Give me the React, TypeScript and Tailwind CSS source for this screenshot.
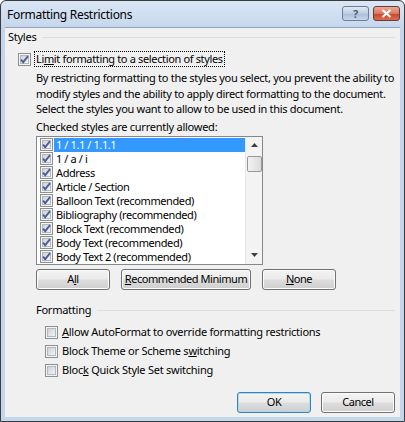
import React from "react";

const font = { fontFamily: '"Segoe UI", "Noto Sans", "Open Sans", sans-serif' };

function Check({ checked }: { checked?: boolean }) {
  return (
    <svg width="13" height="13" viewBox="0 0 13 13" className="shrink-0">
      <defs>
        <linearGradient id="cbg" x1="0" y1="0" x2="1" y2="1">
          <stop offset="0" stopColor="#cbcfd5" />
          <stop offset="1" stopColor="#f6f6f6" />
        </linearGradient>
      </defs>
      <rect x="0.5" y="0.5" width="12" height="12" fill="#f4f4f4" stroke="#8e8f8f" />
      <rect x="2.5" y="2.5" width="8" height="8" fill="url(#cbg)" stroke="#b4b9bf" />
      {checked && (
        <path d="M3 6.6 L5.2 9.2 L10 3.2" fill="none" stroke="#4c6198" strokeWidth="1.9" />
      )}
    </svg>
  );
}

function Btn({ children, w, primary }: { children: React.ReactNode; w: string; primary?: boolean }) {
  return (
    <div
      className={`${w} h-[21px] shrink-0 whitespace-nowrap tracking-[-0.45px] rounded-[3px] border flex items-center justify-center text-black bg-[linear-gradient(#f3f3f3_0%,#ebebeb_48%,#dddddd_52%,#cfcfcf_100%)] ${
        primary ? "border-[#3c7fb1] shadow-[inset_0_0_0_1px_#a7dcf7]" : "border-[#707070] shadow-[inset_0_0_0_1px_#fcfcfc]"
      }`}
    >
      {children}
    </div>
  );
}

const items = [
  "1 / 1.1 / 1.1.1",
  "1 / a / i",
  "Address",
  "Article / Section",
  "Balloon Text (recommended)",
  "Bibliography (recommended)",
  "Block Text (recommended)",
  "Body Text (recommended)",
  "Body Text 2 (recommended)",
];

export default function App() {
  return (
    <div
      style={font}
      className="w-[405px] h-[422px] rounded-t-[6px] border border-[#3b3b3b] bg-[linear-gradient(#dae6f5,#c3d5ec_30px,#c2d6ee)] flex flex-col overflow-hidden"
    >
      {/* title bar */}
      <div className="h-[26px] flex items-center pl-[6px] pr-[4px] shrink-0">
        <span className="text-[12px] tracking-[-0.3px] text-black flex-1 pt-[1px]">Formatting Restrictions</span>
        <div className="flex gap-[4px] -mt-[2px]">
          <div className="w-[27px] h-[15px] rounded-[3px] border border-[#6d7f96] bg-[linear-gradient(#dfe9f5,#bccde3_50%,#a9bdd8_51%,#c6d6ea)] flex items-center justify-center text-[11px] font-bold text-[#4d5e74] leading-none">
            ?
          </div>
          <div className="w-[27px] h-[15px] rounded-[3px] border border-[#6a3a35] bg-[linear-gradient(#eba99a,#dc7660_50%,#c8432a_51%,#dc6c4f)] flex items-center justify-center">
            <svg width="11" height="9" viewBox="0 0 11 9">
              <path d="M1.5 1 L9.5 8 M9.5 1 L1.5 8" stroke="#fff" strokeWidth="2.2" />
            </svg>
          </div>
        </div>
      </div>

      {/* client area */}
      <div className="flex-1 mx-[4px] mb-[4px] bg-[#f0f0f0] border-t border-[#8ea3be] text-[11px] tracking-[-0.25px] text-black flex flex-col">
        <div className="flex items-center pl-[3px] pr-[5px] mt-[1px] h-[16px]">
          <span>Styles</span>
          <div className="flex-1 ml-[6px] h-px bg-[#d5dfe5]" />
        </div>

        <div className="flex items-center ml-[13px] mt-[6px] h-[16px]">
          <Check checked />
          <span className="ml-[3px] px-[1px] border border-dotted border-black leading-[14px] tracking-[-0.35px]">
            Li<u>m</u>it formatting to a selection of styles
          </span>
        </div>

        <div className="ml-[31px] mt-[3px] leading-[15.5px] whitespace-nowrap tracking-[-0.3px]">
          <div>By restricting formatting to the styles you select, you prevent the ability to</div>
          <div>modify styles and the ability to apply direct formatting to the document.</div>
          <div>Select the styles you want to allow to be used in this document.</div>
        </div>

        <div className="ml-[31px] mt-[2px] leading-[16px]">Checked styles are currently allowed:</div>

        <div className="ml-[31px] mt-[1px] w-[227px] h-[129px] shrink-0 border border-[#828790] bg-white flex overflow-hidden">
          <div className="flex-1 pt-[1px] pl-[3px] tracking-[-0.4px]">
            {items.map((t, i) => (
              <div key={t} className="h-[14px] flex items-center">
                <Check checked />
                <span
                  className={`ml-[1px] pl-[2px] h-[14px] leading-[14px] flex-1 whitespace-nowrap ${
                    i === 0 ? "bg-[#3399ff] text-white" : ""
                  }`}
                >
                  {t}
                </span>
              </div>
            ))}
          </div>
          <div className="w-[17px] bg-[#f3f3f3] border-l border-[#e6e6e6] flex flex-col items-center">
            <div className="h-[17px] flex items-center justify-center">
              <svg width="7" height="4" viewBox="0 0 7 4">
                <path d="M0 4 L3.5 0 L7 4 Z" fill="#404040" />
              </svg>
            </div>
            <div className="w-[15px] h-[16px] mt-[2px] rounded-[2px] border border-[#979797] bg-[linear-gradient(90deg,#f2f2f2,#dcdcdc)]" />
            <div className="flex-1" />
            <div className="h-[17px] flex items-center justify-center">
              <svg width="7" height="4" viewBox="0 0 7 4">
                <path d="M0 0 L7 0 L3.5 4 Z" fill="#404040" />
              </svg>
            </div>
          </div>
        </div>

        <div className="flex ml-[31px] mt-[4px] gap-[11px]">
          <Btn w="w-[74px]">
            <span>
              A<u>l</u>l
            </span>
          </Btn>
          <Btn w="w-[130px]">
            <span>
              <u>R</u>ecommended Minimum
            </span>
          </Btn>
          <Btn w="w-[74px]">
            <span>
              <u>N</u>one
            </span>
          </Btn>
        </div>

        <div className="flex items-center ml-[31px] pr-[5px] mt-[13px] h-[16px]">
          <span>Formatting</span>
          <div className="flex-1 ml-[6px] h-px bg-[#d5dfe5]" />
        </div>

        <div className="ml-[40px] mt-[6px] flex flex-col gap-[3px]">
          <div className="flex items-center h-[16px]">
            <Check />
            <span className="ml-[4px]">
              <u>A</u>llow AutoFormat to override formatting restrictions
            </span>
          </div>
          <div className="flex items-center h-[16px]">
            <Check />
            <span className="ml-[4px]">
              Block Theme or Scheme s<u>w</u>itching
            </span>
          </div>
          <div className="flex items-center h-[16px]">
            <Check />
            <span className="ml-[4px]">
              Bloc<u>k</u> Quick Style Set switching
            </span>
          </div>
        </div>

        <div className="flex justify-end gap-[10px] mr-[5px] mt-[13px]">
          <Btn w="w-[74px]" primary>
            OK
          </Btn>
          <Btn w="w-[74px]">Cancel</Btn>
        </div>
      </div>
    </div>
  );
}
